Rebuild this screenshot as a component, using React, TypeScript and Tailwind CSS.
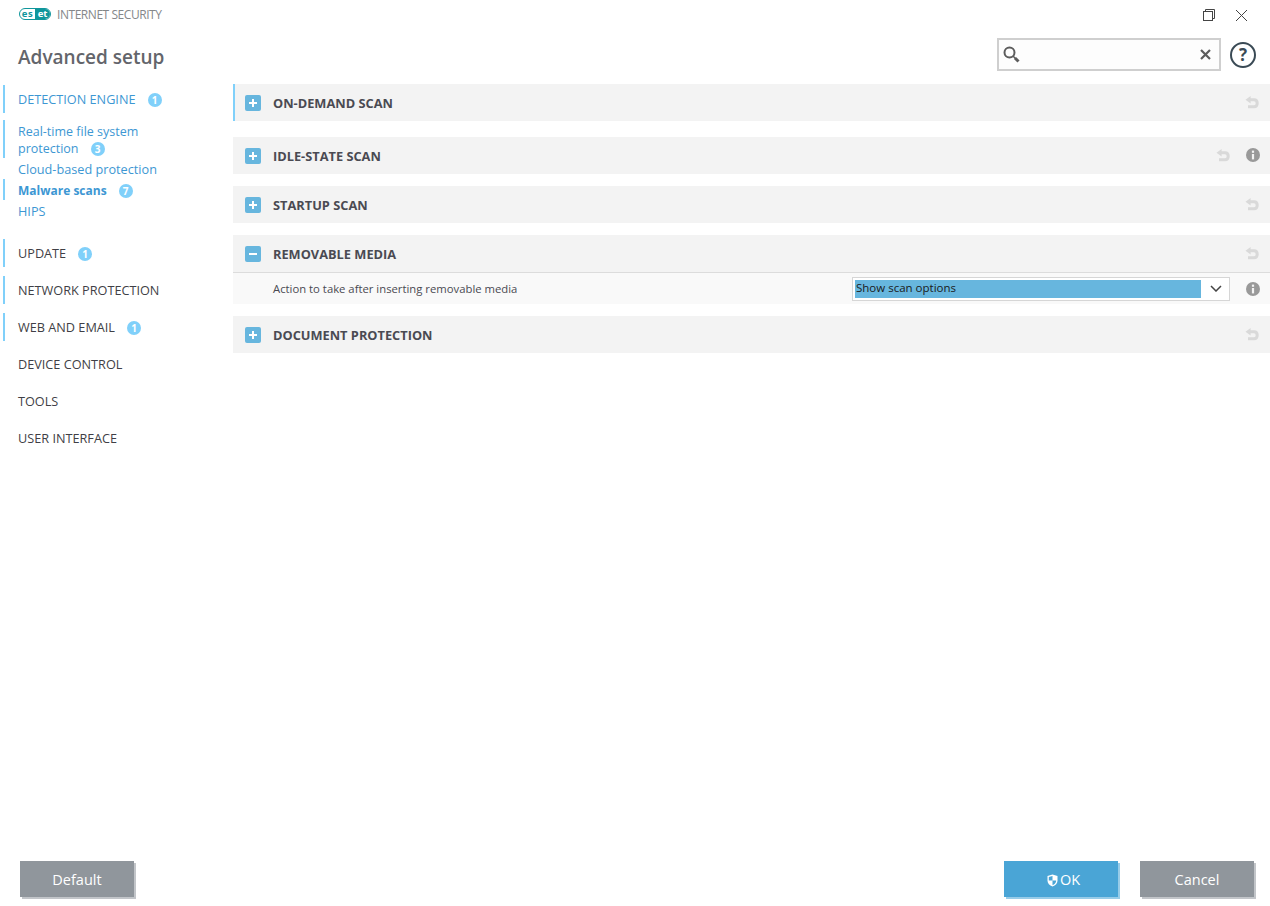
import React from "react";

const Badge = ({ n, className = "" }: { n: number; className?: string }) => (
  <span className={"inline-flex w-[14px] h-[14px] rounded-full bg-[#80d0fa] text-white text-[10px] font-bold items-center justify-center leading-none " + className}>{n}</span>
);

const Undo = () => (
  <svg width="14" height="13" viewBox="0 0 14 13" className="block">
    <path d="M0.5 3.8 L5.6 0 V7.6 Z" fill="#d9d9d9" />
    <path d="M4.5 3.8 H9 C11.2 3.8 12.2 5.2 12.2 7.2 C12.2 9.3 11.2 10.8 9 10.8 H3" fill="none" stroke="#d9d9d9" strokeWidth="3" />
  </svg>
);

const Info = () => (
  <svg width="14" height="14" viewBox="0 0 14 14" className="block">
    <circle cx="7" cy="7" r="7" fill="#999999" />
    <rect x="5.9" y="6" width="2.2" height="5.4" fill="#f3f3f3" />
    <rect x="5.9" y="2.6" width="2.2" height="2.2" fill="#f3f3f3" />
  </svg>
);

const Toggle = ({ open = false }: { open?: boolean }) => (
  <span className="w-4 h-4 rounded-[2px] bg-[#67b6de] relative block shrink-0">
    <span className="absolute left-[4px] top-[7px] w-[8px] h-[2px] bg-white" />
    {!open && <span className="absolute left-[7px] top-[4px] w-[2px] h-[8px] bg-white" />}
  </span>
);

const Section = ({ title, open, info, mark, className = "" }: { title: string; open?: boolean; info?: boolean; mark?: boolean; className?: string }) => (
  <div className={"h-[37px] bg-[#f3f3f3] flex items-center pl-3 " + (mark ? "border-l-2 border-[#80d0fa] " : "") + className}>
    <span className={mark ? "-ml-[2px]" : ""}><Toggle open={open} /></span>
    <span className="ml-3 mt-[2px] text-[12.8px] font-bold text-[#4a4a52]">{title}</span>
    <span className="ml-auto flex items-center">
      {info ? (
        <>
          <Undo />
          <span className="ml-[16px] mr-[10px] mb-[1px]"><Info /></span>
        </>
      ) : (
        <span className="mr-[11px]"><Undo /></span>
      )}
    </span>
  </div>
);

const Btn = ({ children, blue, className = "" }: { children: React.ReactNode; blue?: boolean; className?: string }) => (
  <button className={"w-[114px] h-9 pt-[2px] text-white text-[14.5px] flex items-center justify-center " + (blue ? "bg-[#4aa5d6] shadow-[2px_2px_0_#98cce8] " : "bg-[#90969c] shadow-[2px_2px_0_#c2c5c9] ") + className}>
    {children}
  </button>
);

const NavTop = ({ children, mark, className = "" }: { children: React.ReactNode; mark?: boolean; className?: string }) => (
  <div className={"h-[28px] pt-[2px] flex items-center pl-[13px] ml-[3px] text-[12.7px] text-[#3f3f46] border-l-2 " + (mark ? "border-[#80d0fa] " : "border-transparent ") + className}>
    {children}
  </div>
);

export default function App() {
  return (
    <div className="w-[1270px] h-[906px] bg-white flex flex-col overflow-hidden" style={{ fontFamily: '"Open Sans", "Noto Sans", sans-serif' }}>
      <div className="h-[30px] flex items-center pl-[19px] pr-[22px] shrink-0">
        <span className="flex items-center h-[12px] w-[32px] rounded-[6px] border border-[#0f969c] overflow-hidden text-[9.5px] font-bold leading-none mb-[2px]">
          <span className="w-[15px] text-center text-[#0f969c] tracking-[0.5px]">es</span>
          <span className="flex-1 h-full bg-[#0f969c] text-white text-center leading-[10px]">et</span>
        </span>
        <span className="ml-[6px] text-[12px] text-[#85878a] tracking-[-0.45px] mb-[1px]">INTERNET SECURITY</span>
        <svg width="12" height="12" viewBox="0 0 12 12" className="ml-auto" fill="none" stroke="#444" strokeWidth="1">
          <rect x="0.5" y="2.5" width="9" height="9" />
          <path d="M2.5 2.5 V0.5 H11.5 V9.5 H9.5" />
        </svg>
        <svg width="13" height="13" viewBox="0 0 13 13" className="ml-5" fill="none" stroke="#444" strokeWidth="1">
          <path d="M1 1 L12 12 M12 1 L1 12" />
        </svg>
      </div>

      <div className="h-[54px] flex items-start shrink-0">
        <div className="pl-[18px] pt-[12px] text-[19px] font-semibold leading-[30px] text-[#63656b]">Advanced setup</div>
        <div className="ml-auto flex items-center mt-[8px] mr-[14px]">
          <div className="w-[224px] h-[33px] border-2 border-[#cfcfcf] bg-[#fdfdfd] flex items-center pl-[4px] pr-[5px]">
            <svg width="18" height="19" viewBox="0 0 18 19" fill="none" className="block">
              <circle cx="6.5" cy="7.5" r="5" stroke="#5c5c5c" strokeWidth="2" />
              <path d="M10 11 L12.5 13.5" stroke="#5c5c5c" strokeWidth="1.5" />
              <path d="M12 13 L15.5 16.5" stroke="#5c5c5c" strokeWidth="3" />
            </svg>
            <svg width="11" height="11" viewBox="0 0 11 11" fill="none" className="ml-auto mr-[3px]" stroke="#5c5c5c" strokeWidth="2.2">
              <path d="M1 1 L10 10 M10 1 L1 10" />
            </svg>
          </div>
          <div className="ml-[9px] w-[26px] h-[26px] rounded-full border-2 border-[#3a4a55] flex items-center justify-center text-[17px] font-bold text-[#3a4a55] leading-none">?</div>
        </div>
      </div>

      <div className="flex-1 flex min-h-0">
        <div className="w-[233px] shrink-0 flex flex-col">
          <NavTop mark className="!text-[#3d97d3] mt-[1px]">DETECTION ENGINE<Badge n={1} className="ml-[12px]" /></NavTop>
          <div className="mt-[7px] ml-[3px] pl-[13px] border-l-2 border-[#80d0fa] text-[12.5px] leading-[17px] text-[#3d97d3] pt-[3px] pb-[1px]">
            Real-time file system<br />protection<Badge n={3} className="ml-[12px]" />
          </div>
          <div className="ml-[3px] pl-[13px] pt-[2px] border-l-2 border-transparent h-[21px] flex items-center text-[12.7px] text-[#3d97d3]">Cloud-based protection</div>
          <div className="ml-[3px] pl-[13px] pt-[2px] border-l-2 border-[#80d0fa] h-[21px] flex items-center text-[12px] font-bold text-[#3d97d3]">Malware scans<Badge n={7} className="ml-[12px]" /></div>
          <div className="ml-[3px] pl-[13px] pt-[2px] border-l-2 border-transparent h-[21px] flex items-center text-[12.7px] text-[#3d97d3]">HIPS</div>
          <NavTop mark className="mt-[18px]">UPDATE<Badge n={1} className="ml-[12px]" /></NavTop>
          <NavTop mark className="mt-[9px]">NETWORK PROTECTION</NavTop>
          <NavTop mark className="mt-[9px]">WEB AND EMAIL<Badge n={1} className="ml-[12px]" /></NavTop>
          <NavTop className="mt-[9px]">DEVICE CONTROL</NavTop>
          <NavTop className="mt-[9px]">TOOLS</NavTop>
          <NavTop className="mt-[9px]">USER INTERFACE</NavTop>
        </div>

        <div className="flex-1 min-w-0 flex flex-col">
          <Section title="ON-DEMAND SCAN" mark />
          <Section title="IDLE-STATE SCAN" info className="mt-4" />
          <Section title="STARTUP SCAN" className="mt-3" />
          <Section title="REMOVABLE MEDIA" open className="mt-3" />
          <div className="h-[32px] bg-[#f9f9f9] border-t border-[#dcdcdc] flex items-center">
            <span className="ml-[40px] text-[11.3px] text-[#4a4a52] mt-[1px]">Action to take after inserting removable media</span>
            <div className="ml-auto w-[378px] h-[24px] bg-white border border-[#d6d6d6] flex items-center p-[2px]">
              <span className="w-[346px] h-[18px] bg-[#67b6de] text-[11.5px] leading-[16px] pl-[1px] text-[#1a1a1a]">Show scan options</span>
              <svg width="12" height="7" viewBox="0 0 12 7" fill="none" stroke="#444" strokeWidth="1.5" className="ml-[9px]">
                <path d="M1 1 L6 6 L11 1" />
              </svg>
            </div>
            <span className="ml-[16px] mr-[10px]"><Info /></span>
          </div>
          <Section title="DOCUMENT PROTECTION" className="mt-3" />
        </div>
      </div>

      <div className="h-[45px] flex items-start pl-5 pr-[16px] shrink-0">
        <Btn>Default</Btn>
        <Btn blue className="ml-auto pl-[5px]">
          <svg width="11" height="13" viewBox="0 0 11 13" className="mr-[2px]">
            <path d="M5.5 0.5 L10.5 2 V6.5 C10.5 9.5 8.5 11.5 5.5 12.5 C2.5 11.5 0.5 9.5 0.5 6.5 V2 Z" fill="#fff" />
            <path d="M5.5 2 V6.5 H9.2 C9 9 7.5 10.5 5.5 11.2 Z M5.5 6.5 H1.8 V3 L5.5 2 Z" fill="#4aa5d6" />
          </svg>
          OK
        </Btn>
        <Btn className="ml-[22px]">Cancel</Btn>
      </div>
    </div>
  );
}
